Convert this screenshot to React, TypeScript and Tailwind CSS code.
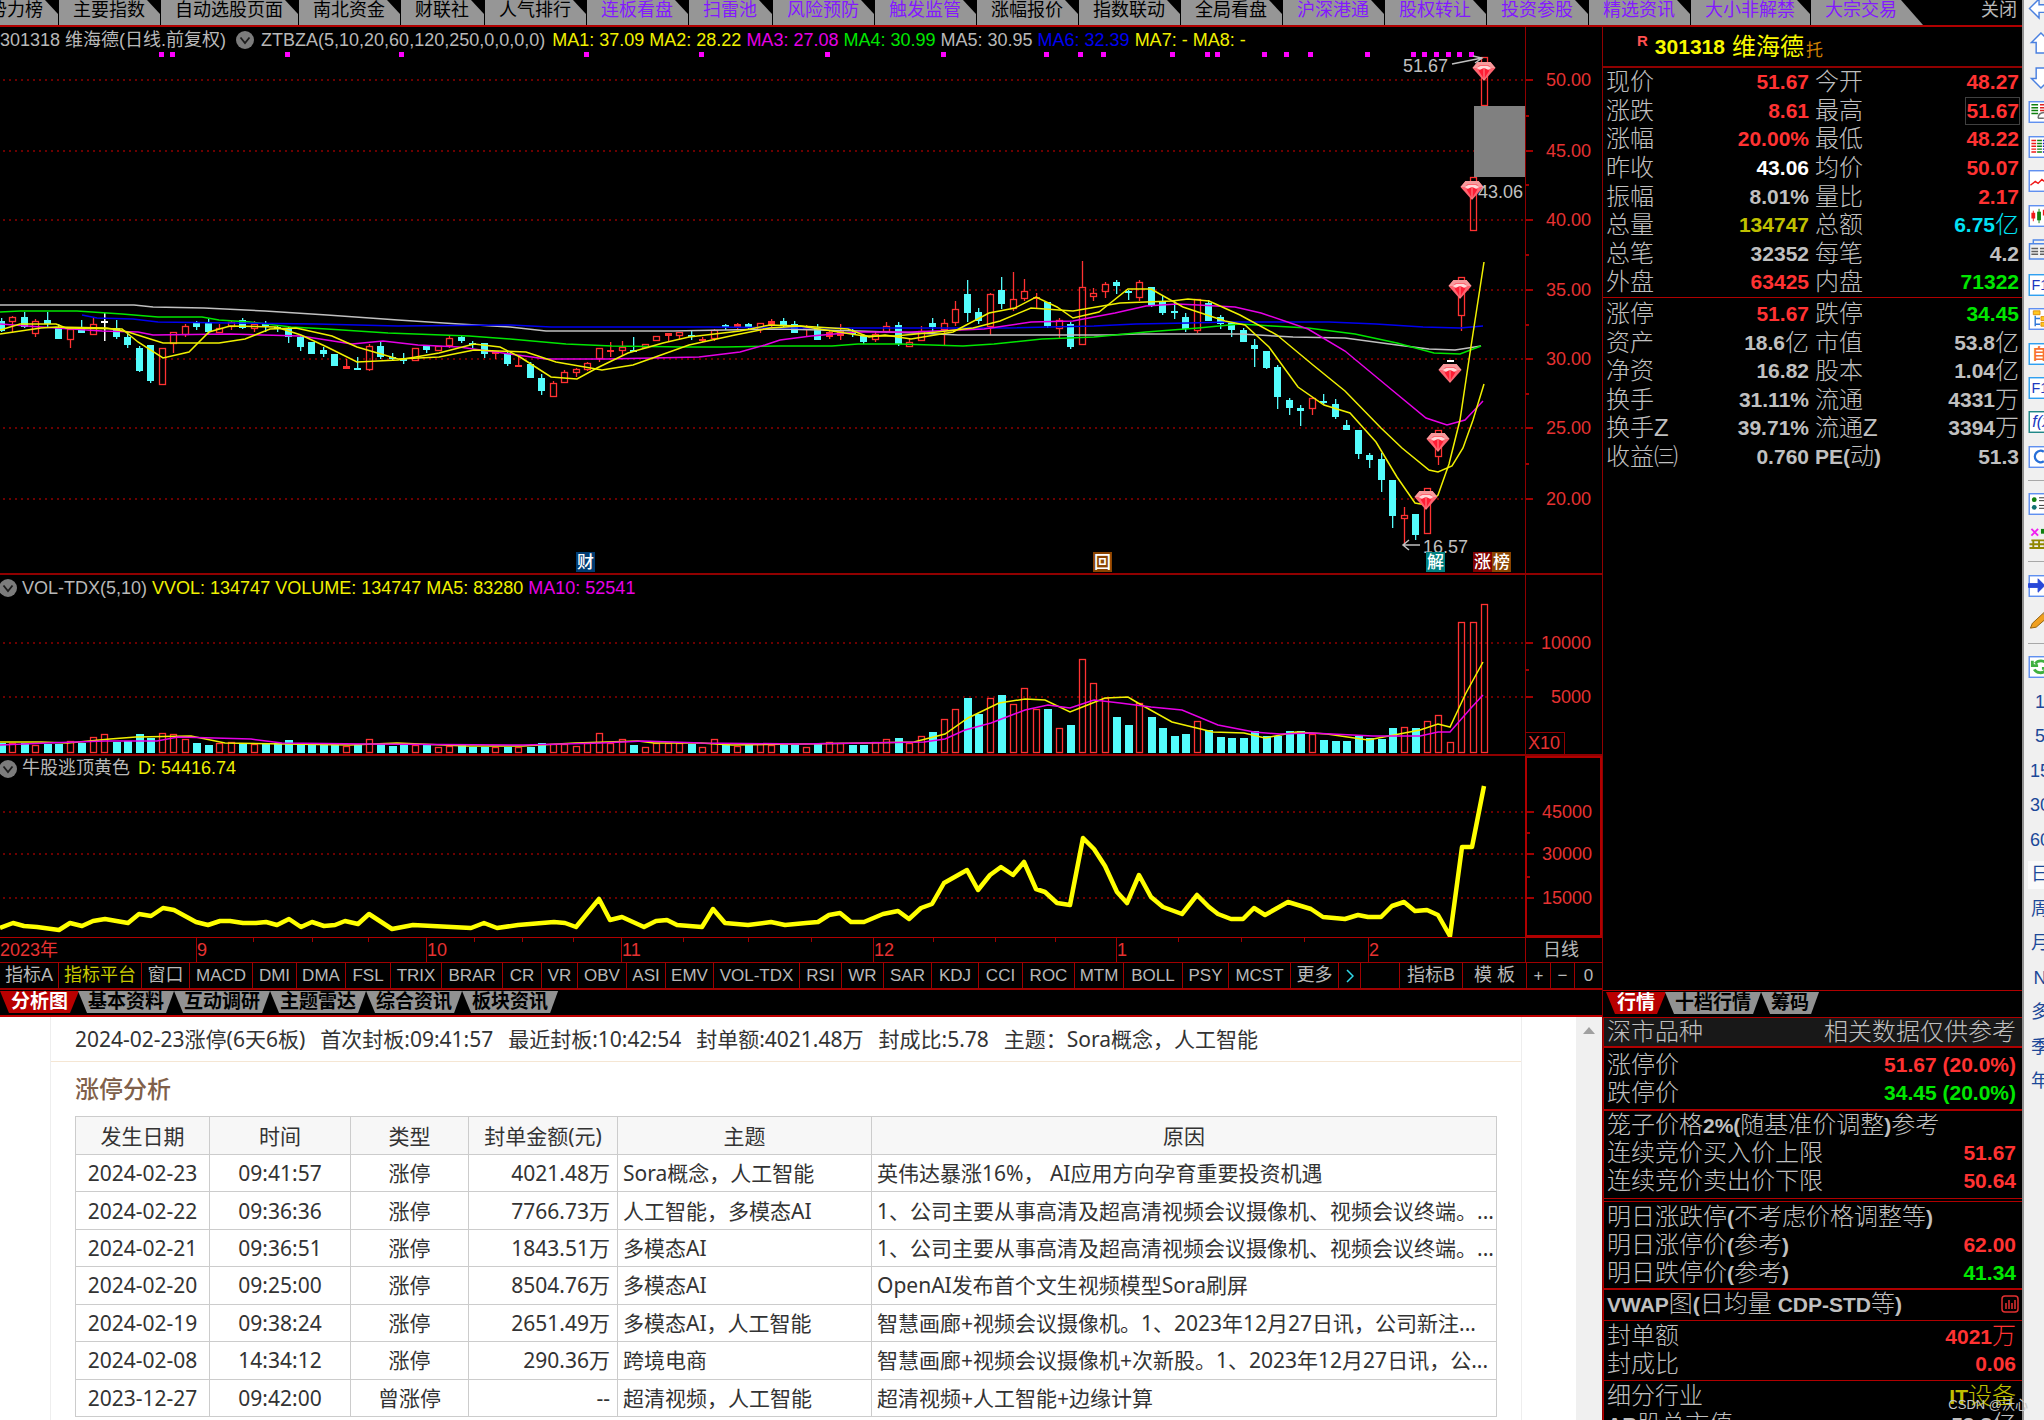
import { Fragment, type ReactNode } from 'react';

type Kind = 'u' | 'd' | 's' | 'w';
// kind, body top, body bottom, high, low
type Candle = [Kind, number, number, number, number];

const STEP = 11.5;
const candleX = (i: number) => Math.round(0.6 + STEP * i);

const topTabs = [
  { label: '主要指数', hot: false },
  { label: '自动选股页面', hot: false },
  { label: '南北资金', hot: false },
  { label: '财联社', hot: false },
  { label: '人气排行', hot: false },
  { label: '连板看盘', hot: true },
  { label: '扫雷池', hot: true },
  { label: '风险预防', hot: true },
  { label: '触发监管', hot: true },
  { label: '涨幅报价', hot: false },
  { label: '指数联动', hot: false },
  { label: '全局看盘', hot: false },
  { label: '沪深港通', hot: true },
  { label: '股权转让', hot: true },
  { label: '投资参股', hot: true },
  { label: '精选资讯', hot: true },
  { label: '大小非解禁', hot: true },
];

// Values are in thirds of a pixel under the base line of the segment.
const segments: { base: number; start: number; rows: Candle[] }[] = [
  {
    base: 300,
    start: 0,
    rows: [
      ['d', 62, 92, 55, 97], ['u', 52, 65, 48, 95], ['d', 50, 82, 35, 85], ['u', 62, 102, 58, 110],
      ['d', 60, 72, 35, 80], ['d', 82, 117, 72, 117], ['u', 88, 120, 80, 143], ['d', 80, 98, 60, 98],
      ['u', 72, 106, 55, 106], ['w', 64, 67, 40, 122], ['d', 85, 112, 60, 117], ['d', 112, 135, 92, 143],
      ['d', 145, 212, 137, 216], ['d', 135, 243, 135, 248], ['u', 145, 255, 145, 255], ['u', 97, 133, 97, 160],
      ['u', 78, 104, 72, 112], ['d', 65, 80, 62, 90], ['d', 65, 95, 57, 104], ['u', 85, 98, 72, 98],
      ['u', 65, 82, 62, 90], ['d', 60, 85, 55, 88], ['u', 72, 88, 62, 95], ['d', 70, 78, 62, 95],
      ['d', 80, 86, 76, 95], ['d', 84, 112, 80, 130], ['d', 112, 140, 108, 152], ['d', 125, 162, 125, 162],
      ['d', 150, 163, 142, 172], ['d', 162, 198, 162, 198], ['s', 198, 206, 178, 206], ['d', 203, 207, 172, 207],
      ['u', 137, 210, 132, 214], ['d', 138, 170, 125, 176], ['d', 172, 178, 160, 182], ['d', 176, 184, 158, 193],
      ['u', 145, 182, 145, 182], ['d', 138, 150, 138, 160], ['u', 138, 152, 138, 152], ['u', 115, 138, 108, 145],
      ['d', 112, 124, 106, 130], ['d', 130, 134, 122, 145], ['d', 130, 162, 130, 175], ['s', 154, 162, 154, 177],
      ['d', 158, 192, 152, 197], ['s', 195, 202, 172, 202], ['d', 193, 234, 187, 234], ['d', 234, 274, 222, 284],
      ['u', 249, 291, 243, 291], ['u', 216, 250, 210, 250], ['u', 208, 218, 204, 230], ['u', 189, 210, 185, 213],
      ['u', 145, 178, 145, 187], ['s', 150, 153, 127, 170], ['u', 142, 152, 122, 168], ['d', 150, 155, 112, 155],
      ['u', 132, 145, 132, 145], ['u', 109, 124, 109, 124], ['s', 100, 108, 100, 126], ['u', 97, 107, 97, 117],
      ['d', 106, 110, 90, 120], ['s', 118, 121, 110, 127], ['u', 90, 117, 86, 122], ['d', 76, 82, 72, 90],
      ['s', 72, 80, 68, 86], ['d', 72, 82, 68, 86], ['u', 70, 90, 70, 98], ['s', 64, 74, 58, 80],
    ],
  },
  {
    base: 240,
    start: 68,
    rows: [
      ['d', 243, 256, 234, 262], ['d', 253, 278, 243, 278], ['s', 265, 270, 255, 290], ['d', 265, 300, 252, 300],
      ['s', 275, 292, 270, 297], ['s', 270, 287, 252, 300], ['d', 275, 280, 268, 292], ['d', 288, 306, 282, 312],
      ['u', 282, 300, 275, 306], ['u', 258, 275, 247, 280], ['d', 256, 312, 247, 318], ['u', 305, 322, 295, 322],
      ['u', 272, 304, 258, 304], ['d', 248, 262, 234, 275], ['u', 250, 270, 238, 318], ['u', 208, 250, 184, 258],
      ['d', 162, 220, 120, 245], ['d', 217, 243, 203, 252], ['u', 163, 262, 158, 284], ['d', 150, 192, 112, 207],
      ['u', 178, 206, 95, 214], ['u', 154, 178, 118, 182], ['s', 172, 178, 158, 205], ['d', 185, 257, 185, 264],
      ['u', 241, 268, 235, 294], ['d', 252, 320, 247, 328], ['u', 142, 314, 64, 314], ['u', 160, 170, 145, 184],
      ['u', 133, 156, 126, 174], ['d', 126, 138, 120, 162], ['d', 152, 156, 150, 180], ['u', 127, 174, 121, 184],
      ['d', 140, 195, 140, 202], ['d', 182, 219, 168, 224], ['d', 214, 218, 184, 238], ['d', 230, 268, 220, 275],
      ['u', 178, 272, 178, 280], ['d', 190, 243, 180, 243], ['d', 230, 252, 225, 268], ['d', 247, 270, 247, 292],
      ['d', 270, 305, 265, 305], ['d', 315, 327, 297, 382], ['d', 333, 384, 333, 388], ['d', 382, 471, 374, 508],
      ['d', 481, 504, 473, 526], ['d', 505, 512, 495, 558], ['u', 475, 508, 470, 525], ['d', 482, 490, 463, 494],
      ['d', 491, 531, 478, 536], ['d', 555, 571, 541, 571], ['d', 571, 643, 571, 656], ['d', 644, 660, 639, 684],
      ['d', 657, 720, 640, 756], ['d', 720, 828, 720, 864], ['u', 825, 836, 801, 915], ['d', 823, 886, 823, 900],
      ['u', 745, 882, 745, 882], ['u', 570, 652, 570, 674], ['w', 361, 365, 361, 365], ['u', 110, 228, 110, 274],
      ['u', -189, -27, -189, -27], ['u', -549, -402, -549, -402],
    ],
  },
];

const candles = segments.flatMap(({ base, start, rows }) =>
  rows.map(([kind, ...ys], i) => {
    const [top, bottom, high, low] = ys.map((v) => Math.round(base + v / 3));
    return { kind, x: candleX(start + i), top, bottom, high, low };
  }),
);

const volumes = [
  31, 31, 29, 24, 27, 27, 37, 29, 47, 56, 34, 37, 58, 46, 61, 56, 41, 31, 25, 29, 32, 29, 27, 29, 31, 39, 29, 28, 24, 24,
  22, 24, 42, 27, 21, 23, 25, 23, 19, 22, 23, 19, 19, 19, 19, 19, 19, 30, 27, 27, 21, 31, 61, 31, 41, 25, 19, 29, 29, 29,
  27, 19, 42, 27, 21, 23, 27, 23, 23, 23, 19, 31, 33, 31, 25, 25, 33, 43, 44, 31, 51, 62, 101, 132, 166, 116, 164, 175,
  146, 196, 131, 131, 74, 85, 281, 209, 164, 107, 85, 151, 107, 76, 52, 58, 97, 70, 49, 44, 44, 66, 52, 52, 67, 67, 57,
  39, 35, 35, 51, 44, 43, 75, 79, 75, 97, 115, 34, 393, 393, 447,
];

const maLines = [
  { color: '#c0c0c0', points: '0,305 134,305 153,307 204,308 265,311 327,315 398,320 459,324 510,327 546,331 673,331 780,329 858,331 916,333 958,335 1109,335 1136,334 1240,334 1293,337 1345,338 1397,345 1429,349 1455,350 1481,346' },
  { color: '#00e600', points: '0,312 20,311 77,311 122,314 158,317 202,317 219,320 250,322 291,327 327,329 388,333 469,336 510,339 566,344 612,346 684,347 724,347 780,346 832,346 858,344 900,344 963,346 994,344 1042,339 1094,337 1146,332 1198,328 1240,324 1272,326 1308,328 1355,334 1397,343 1434,353 1460,354 1481,346' },
  { color: '#0000f0', points: '82,315 97,318 133,319 158,322 230,323 316,324 398,326 510,325 551,327 709,327 800,328 1005,328 1094,326 1136,324 1188,323 1230,322 1329,322 1376,324 1423,327 1460,328 1483,326' },
  { color: '#e600e6', points: '0,324 41,327 102,331 138,332 153,335 230,334 301,336 352,344 383,341 418,345 459,347 510,354 546,359 607,359 699,357 740,352 765,345 780,340 811,336 858,332 911,332 984,329 1031,322 1073,321 1115,313 1146,306 1177,304 1198,305 1235,307 1261,313 1308,329 1345,351 1392,390 1426,418 1447,425 1465,420 1483,401' },
  { color: '#f0f000', points: '0,334 41,328 56,327 107,328 128,332 163,343 219,343 245,339 270,329 296,328 332,336 357,347 398,359 439,357 474,350 526,352 556,362 602,370 633,365 689,345 735,335 770,328 800,326 832,331 864,336 895,336 937,332 973,328 1000,321 1031,308 1073,311 1120,303 1172,301 1188,299 1209,301 1240,315 1277,335 1313,365 1345,391 1381,428 1402,448 1429,470 1438,472 1452,466 1463,448 1473,420 1484,384' },
  { color: '#f0f000', points: '0,330 20,324 56,324 66,328 122,329 138,342 163,358 189,352 209,332 230,326 276,327 301,335 327,347 357,362 398,360 439,353 474,344 500,347 520,357 551,377 577,379 597,368 628,353 663,343 689,337 740,331 770,325 800,326 848,329 869,337 885,335 911,339 953,332 989,313 1015,308 1036,297 1057,307 1073,318 1099,312 1128,289 1151,289 1183,307 1225,321 1245,325 1269,347 1298,387 1324,405 1350,413 1376,442 1397,477 1415,503 1426,505 1438,495 1449,464 1460,420 1470,353 1484,262' },
];

const volLines = [
  { color: '#f0f000', points: '0,742 41,742 68,743 110,739 136,737 191,736 225,743 350,745 397,743 466,746 523,746 575,743 638,741 654,743 701,743 732,745 800,744 867,743 914,742 945,734 968,718 999,703 1025,699 1045,700 1070,712 1085,706 1105,698 1128,697 1138,703 1172,722 1213,732 1244,733 1265,738 1296,732 1327,734 1368,740 1394,735 1420,730 1438,724 1450,727 1466,693 1483,662' },
  { color: '#e600e6', points: '0,745 47,743 105,741 157,741 178,737 251,739 282,743 366,744 523,745 601,743 643,741 701,743 800,744 924,742 945,739 965,730 991,723 1025,710 1048,705 1070,708 1094,700 1120,703 1151,707 1182,710 1218,725 1254,732 1280,734 1311,733 1373,736 1420,736 1438,732 1450,732 1471,708 1483,695' },
];

const escapeLine =
  '0,928 13,923 24,926 37,927 59,930 70,923 82,926 93,921 105,919 128,923 139,914 151,916 163,908 174,910 196,922 208,925 220,921 230,921 243,923 256,923 266,922 277,925 289,919 301,927 312,922 324,926 335,925 345,921 358,924 369,914 392,929 413,925 471,928 484,923 497,928 518,925 554,922 565,923 576,927 599,899 610,920 622,917 644,927 656,921 667,920 677,925 702,927 713,909 725,923 748,925 771,922 785,925 806,923 818,922 829,915 840,913 851,922 864,922 883,914 898,911 909,919 921,908 932,904 944,883 967,870 978,890 990,875 1001,867 1013,875 1024,862 1036,889 1045,892 1057,903 1070,905 1083,838 1094,849 1105,866 1117,892 1127,903 1139,875 1151,897 1163,907 1182,914 1197,895 1209,907 1218,914 1231,919 1243,919 1254,908 1265,915 1288,902 1311,909 1323,917 1345,919 1358,915 1368,917 1381,917 1392,906 1404,902 1415,911 1427,910 1438,915 1450,936 1462,847 1472,847 1484,786';

const signalDots = [
  161, 172, 287, 401, 586, 701, 827, 943, 1046, 1080, 1103, 1172, 1207, 1217, 1264, 1286, 1310, 1367, 1413, 1424, 1436,
  1448, 1459, 1471,
];

const gems = [
  [1484, 62], [1472, 181], [1460, 280], [1450, 364], [1438, 433], [1426, 491],
];

const badges = [
  { x: 576, text: '财', fill: '#003c72' },
  { x: 1093, text: '回', fill: '#8a4400' },
  { x: 1426, text: '解', fill: '#008080' },
  { x: 1473, text: '涨', fill: '#800000' },
  { x: 1492, text: '榜', fill: '#8a4400' },
];

const months = [
  { x: 196, label: '9' },
  { x: 426, label: '10' },
  { x: 621, label: '11' },
  { x: 873, label: '12' },
  { x: 1116, label: '1' },
  { x: 1368, label: '2' },
];
const weekTicks = [253, 312, 368, 474, 522, 573, 683, 748, 811, 933, 995, 1055, 1178, 1241, 1304];

const indicators = [
  { label: '指标A', width: 'w-[59px] text-[18px]' },
  { label: '指标平台', width: 'w-[83px] text-[18px]', active: true },
  { label: '窗口', width: 'w-[48px] text-[18px]' },
  { label: 'MACD', width: 'w-[63px]' },
  { label: 'DMI', width: 'w-[44px]' },
  { label: 'DMA', width: 'w-[49px]' },
  { label: 'FSL', width: 'w-[45px]' },
  { label: 'TRIX', width: 'w-[51px]' },
  { label: 'BRAR', width: 'w-[61px]' },
  { label: 'CR', width: 'w-[39px]' },
  { label: 'VR', width: 'w-[36px]' },
  { label: 'OBV', width: 'w-[49px]' },
  { label: 'ASI', width: 'w-[39px]' },
  { label: 'EMV', width: 'w-[48px]' },
  { label: 'VOL-TDX', width: 'w-[86px]' },
  { label: 'RSI', width: 'w-[42px]' },
  { label: 'WR', width: 'w-[42px]' },
  { label: 'SAR', width: 'w-[48px]' },
  { label: 'KDJ', width: 'w-[47px]' },
  { label: 'CCI', width: 'w-[44px]' },
  { label: 'ROC', width: 'w-[52px]' },
  { label: 'MTM', width: 'w-[49px]' },
  { label: 'BOLL', width: 'w-[59px]' },
  { label: 'PSY', width: 'w-[46px]' },
  { label: 'MCST', width: 'w-[62px]' },
  { label: '更多', width: 'w-[48px] text-[18px]' },
];

const quotes = [
  ['现价', '51.67', '', 'text-[#ff3232]', '今开', '48.27', '', 'text-[#ff3232]'],
  ['涨跌', '8.61', '', 'text-[#ff3232]', '最高', '51.67', '', 'text-[#ff3232] outline outline-[#404040]'],
  ['涨幅', '20.00%', '', 'text-[#ff3232]', '最低', '48.22', '', 'text-[#ff3232]'],
  ['昨收', '43.06', '', 'text-white', '均价', '50.07', '', 'text-[#ff3232]'],
  ['振幅', '8.01%', '', 'text-[#c0c0c0]', '量比', '2.17', '', 'text-[#ff3232]'],
  ['总量', '134747', '', 'text-[#c0c000]', '总额', '6.75', '亿', 'text-[#02e2f4]'],
  ['总笔', '32352', '', 'text-[#c0c0c0]', '每笔', '4.2', '', 'text-[#c0c0c0]'],
  ['外盘', '63425', '', 'text-[#ff3232]', '内盘', '71322', '', 'text-[#00e600]'],
];

const fundamentals = [
  ['涨停', '51.67', '', 'text-[#ff3232]', '跌停', '34.45', '', 'text-[#00e600]'],
  ['资产', '18.6', '亿', 'text-[#c0c0c0]', '市值', '53.8', '亿', 'text-[#c0c0c0]'],
  ['净资', '16.82', '', 'text-[#c0c0c0]', '股本', '1.04', '亿', 'text-[#c0c0c0]'],
  ['换手', '31.11%', '', 'text-[#c0c0c0]', '流通', '4331', '万', 'text-[#c0c0c0]'],
  ['换手Z', '39.71%', '', 'text-[#c0c0c0]', '流通Z', '3394', '万', 'text-[#c0c0c0]'],
  ['收益㈢', '0.760', '', 'text-[#c0c0c0]', 'PE(动)', '51.3', '', 'text-[#c0c0c0]'],
];

const limitUps = [
  ['2024-02-23', '09:41:57', '涨停', '4021.48万', 'Sora概念，人工智能', '英伟达暴涨16%， AI应用方向孕育重要投资机遇'],
  ['2024-02-22', '09:36:36', '涨停', '7766.73万', '人工智能，多模态AI', '1、公司主要从事高清及超高清视频会议摄像机、视频会议终端。...'],
  ['2024-02-21', '09:36:51', '涨停', '1843.51万', '多模态AI', '1、公司主要从事高清及超高清视频会议摄像机、视频会议终端。...'],
  ['2024-02-20', '09:25:00', '涨停', '8504.76万', '多模态AI', 'OpenAI发布首个文生视频模型Sora刷屏'],
  ['2024-02-19', '09:38:24', '涨停', '2651.49万', '多模态AI，人工智能', '智慧画廊+视频会议摄像机。1、2023年12月27日讯，公司新注...'],
  ['2024-02-08', '14:34:12', '涨停', '290.36万', '跨境电商', '智慧画廊+视频会议摄像机+次新股。1、2023年12月27日讯，公...'],
  ['2023-12-27', '09:42:00', '曾涨停', '--', '超清视频，人工智能', '超清视频+人工智能+边缘计算'],
];

function GridLine({ y }: { y: number }) {
  return <line x1="3" x2="100%" y1={y} y2={y} stroke="#900000" strokeWidth="1.5" strokeDasharray="2 4" />;
}

function Collapse({ label, className = '' }: { label: string; className?: string }) {
  return (
    <button aria-label={label} className={`shrink-0 ${className}`}>
      <svg className="size-[18px]" viewBox="0 0 18 18">
        <circle cx="9" cy="9" r="9" fill="#7c7c7c" />
        <path d="M4.500 6.500 9 12l4.500-5.500" fill="none" stroke="#1c1c1c" strokeWidth="1.800" />
      </svg>
    </button>
  );
}

function Gem({ x, y }: { x: number; y: number }) {
  return (
    <g transform={`translate(${x - 11.5} ${y})`}>
      <path d="M5 0h13l5 6-11.500 13L0 6z" fill="#ff6470" />
      <path d="M5 0h13l5 6h-4l-3-3H7L4 6H0z" fill="#f79a9c" />
      <path d="M4 6 8 4h7l4 2-4 2-3.500-2L8 8z" fill="#ffd9d9" />
      <path d="M6 8.500 11.500 6 17 8.500 11.500 17z" fill="#ff1c34" />
      <path d="M11.500 6v12" stroke="#ff8d90" />
    </g>
  );
}

function CandleShape({ kind, x, top, bottom, high, low }: (typeof candles)[number]) {
  if (kind === 'w') {
    return (
      <g fill="#ffffff">
        <rect x={x - 3} y={top} width="7" height="2" />
        <rect x={x} y={high} width="1.5" height={low - high} />
      </g>
    );
  }
  const height = Math.max(bottom - top, 2);
  if (kind === 'u') {
    return (
      <g stroke="#ff3232" fill="none" strokeWidth="1.3">
        <path d={`M${x + 0.5} ${high}V${top}M${x + 0.5} ${bottom}V${low}`} />
        <rect x={x - 2.5} y={top + 0.5} width="6" height={Math.max(height - 1, 1)} />
      </g>
    );
  }
  return (
    <g fill={kind === 'd' ? '#54fcfc' : '#ff3232'}>
      <rect x={x - 3} y={top} width="7" height={height} />
      <rect x={x} y={high} width="1.3" height={low - high} />
    </g>
  );
}

function PriceChart() {
  return (
    <svg className="block h-[521px] w-full overflow-hidden text-[18px]">
      <g transform="translate(0 -52)">
        {[80, 151, 220, 290, 359, 428, 499].map((y) => (
          <GridLine key={y} y={y} />
        ))}
        {signalDots.map((x) => (
          <rect key={x} x={x - 2} y="52" width="5" height="5" fill="#ff00ff" />
        ))}
        {candles.map((candle) => (
          <CandleShape key={candle.x} {...candle} />
        ))}
        {maLines.map((line) => (
          <polyline key={line.points} points={line.points} fill="none" stroke={line.color} strokeWidth="1.5" />
        ))}
        <rect x="1474" y="106" width="51" height="71" fill="#808080" />
        {gems.map(([x, y]) => (
          <Gem key={x} x={x} y={y} />
        ))}
        <g fill="#c0c0c0">
          <text x="1403" y="72">51.67</text>
          <text x="1478" y="198">43.06</text>
          <text x="1423" y="553">16.57</text>
        </g>
        <g fill="none" stroke="#c0c0c0" strokeWidth="1.5">
          <path d="M1452 64l30-6m-9-2 9 2-7 5" />
          <path d="M1420 545h-17m6-5-6 5 6 5" />
        </g>
        {badges.map((badge) => (
          <g key={badge.text}>
            <rect x={badge.x} y="552" width="19" height="20" fill={badge.fill} />
            <text x={badge.x + 1} y="568" className="text-[17px] font-medium" fill="#ffffff">
              {badge.text}
            </text>
          </g>
        ))}
      </g>
    </svg>
  );
}

function VolumeChart() {
  return (
    <svg className="block h-[154px] w-full overflow-hidden">
      <g transform="translate(0 -600)">
        <GridLine y={643} />
        <GridLine y={697} />
        {volumes.map((v, i) => {
          const h = Math.round(v / 3);
          const x = candleX(i);
          return candles[i].kind === 'd' ? (
            <rect key={x} x={x - 3} y={753 - h} width="8" height={h} fill="#54fcfc" />
          ) : (
            <rect key={x} x={x - 2.5} y={753.5 - h} width="6" height={h - 1} fill="none" stroke="#ff3232" strokeWidth="1.3" />
          );
        })}
        {volLines.map((line) => (
          <polyline key={line.color} points={line.points} fill="none" stroke={line.color} strokeWidth="1.5" />
        ))}
      </g>
    </svg>
  );
}

function EscapeChart() {
  return (
    <svg className="block h-[156px] w-full overflow-hidden">
      <g transform="translate(0 -781)">
        {[812, 854, 898].map((y) => (
          <GridLine key={y} y={y} />
        ))}
        <polyline points={escapeLine} fill="none" stroke="#ffff00" strokeWidth="4.5" strokeLinejoin="round" />
      </g>
    </svg>
  );
}

function Axis({ top, labels, minor }: { top: number; labels: [number, string][]; minor: number[] }) {
  return (
    <svg className="block h-full w-full text-[18px]">
      <g transform={`translate(0 ${-top})`}>
        {labels.map(([y, text]) => (
          <Fragment key={text}>
            <path d={`M0 ${y}h7`} stroke="#a00000" strokeWidth="2" />
            <text x="65" y={y + 6} textAnchor="end" fill="#e63232">
              {text}
            </text>
          </Fragment>
        ))}
        {minor.map((y) => (
          <path key={y} d={`M0 ${y}h3`} stroke="#a00000" strokeWidth="2" />
        ))}
      </g>
    </svg>
  );
}

function SlantTabs({ tabs }: { tabs: string[] }) {
  return (
    <nav className="flex items-center pt-px text-[19px] leading-[22px] font-bold">
      {tabs.map((tab, i) => (
        <button
          key={tab}
          className={`-mr-[2px] px-[11px] whitespace-nowrap ${
            i === 0
              ? 'relative bg-[#b80000] text-white [clip-path:polygon(0_0,100%_0,calc(100%-9px)_100%,9px_100%)]'
              : 'bg-[#929292] text-black [clip-path:polygon(1px_0,calc(100%-1px)_0,calc(100%-9px)_100%,10px_100%)]'
          }`}
        >
          {tab}
        </button>
      ))}
    </nav>
  );
}

function TopTabs() {
  return (
    <header className="flex h-[27px] shrink-0 border-b-2 border-[#b00000] text-[18px] leading-[21px] whitespace-nowrap">
      <nav className="flex min-w-0 flex-1 overflow-hidden">
        <button className="flex w-[59px] shrink-0 justify-end bg-[#969696] pr-[16px] text-black [clip-path:polygon(0_0,calc(100%-14px)_0,calc(100%-1px)_14px,calc(100%-1px)_100%,0_100%)]">
          势力榜
        </button>
        {topTabs.map((tab) => (
          <button
            key={tab.label}
            className={`flex shrink-0 bg-[#969696] pr-[16px] pl-[14px] [clip-path:polygon(0_0,calc(100%-14px)_0,calc(100%-1px)_14px,calc(100%-1px)_100%,0_100%)] ${
              tab.hot ? 'text-[#8418ff]' : 'text-black'
            }`}
          >
            {tab.label}
          </button>
        ))}
        <button className="flex shrink-0 bg-[#969696] pr-[26px] pl-[14px] text-[#8418ff] [clip-path:polygon(0_0,calc(100%-22px)_0,100%_100%,0_100%)]">
          大宗交易
        </button>
      </nav>
      <button className="flex px-[5px] text-[#b8b8b8]">关闭</button>
    </header>
  );
}

function IndicatorBar() {
  const cell = 'shrink-0 border-r border-[#a00000] text-center whitespace-nowrap';
  return (
    <div className="flex h-[27px] border-b-2 border-[#a00000] text-[17px] leading-[25px] text-[#b8b8b8]">
      {indicators.map((item) => (
        <button key={item.label} className={`${cell} ${item.width} ${item.active ? 'text-[#c8c800]' : ''}`}>
          {item.label}
        </button>
      ))}
      <button aria-label="下一页" className="w-[22px] shrink-0 border-r border-[#a00000]">
        <svg className="mx-auto h-[25px] w-[8px]" viewBox="0 0 8 25">
          <path d="M1 7l6 6-6 6" fill="none" stroke="#30d8e8" strokeWidth="1.500" />
        </svg>
      </button>
      <span className="flex-1 border-r border-[#a00000]" />
      <button className={`${cell} w-[63px] text-[18px]`}>指标B</button>
      <button className={`${cell} w-[64px] text-[18px]`}>模 板</button>
      <button className={`${cell} w-[24px]`}>+</button>
      <button className={`${cell} w-[24px]`}>−</button>
      <button className="w-[27px] shrink-0">0</button>
    </div>
  );
}

function ChartColumn() {
  return (
    <>
      <section className="flex h-[548px] shrink-0 border-b-2 border-[#900000]">
        <div className="min-w-0 flex-1">
          <div className="flex h-[25px] items-center gap-[5px] pt-px text-[18px] whitespace-nowrap">
            <span>301318 维海德(日线.前复权)</span>
            <Collapse label="主图指标" className="mr-[2px] ml-[5px]" />
            <span className="mr-[2px]">ZTBZA(5,10,20,60,120,250,0,0,0,0)</span>
            <span className="text-[#f0f000]">MA1: 37.09</span>
            <span className="text-[#f0f000]">MA2: 28.22</span>
            <span className="text-[#e600e6]">MA3: 27.08</span>
            <span className="text-[#00e600]">MA4: 30.99</span>
            <span>MA5: 30.95</span>
            <span className="text-[#0000f0]">MA6: 32.39</span>
            <span className="text-[#f0f000]">MA7: -</span>
            <span className="text-[#f0f000]">MA8: -</span>
          </div>
          <PriceChart />
        </div>
        <div className="w-[77px] border-l border-[#900000]">
          <Axis
            top={27}
            labels={[[80, '50.00'], [151, '45.00'], [220, '40.00'], [290, '35.00'], [359, '30.00'], [428, '25.00'], [499, '20.00']]}
            minor={[116, 185, 255, 325, 394, 464]}
          />
        </div>
      </section>
      <section className="flex h-[181px] shrink-0 border-b-2 border-[#900000]">
        <div className="min-w-0 flex-1">
          <div className="flex h-[25px] items-center gap-[5px] text-[18px] leading-[22px] whitespace-nowrap">
            <Collapse label="成交量指标" className="-ml-px" />
            <span>VOL-TDX(5,10)</span>
            <span className="text-[#f0f000]">VVOL: 134747</span>
            <span className="text-[#f0f000]">VOLUME: 134747</span>
            <span className="text-[#f0f000]">MA5: 83280</span>
            <span className="text-[#e600e6]">MA10: 52541</span>
          </div>
          <VolumeChart />
        </div>
        <div className="flex w-[77px] flex-col border-l border-[#900000]">
          <div className="min-h-0 flex-1">
            <Axis top={575} labels={[[643, '10000'], [697, '5000']]} minor={[670]} />
          </div>
          <span className="h-[22px] w-[39px] border-t border-r border-[#900000] pl-[2px] text-[18px] leading-[21px] text-[#e63232]">
            X10
          </span>
        </div>
      </section>
      <section className="flex h-[182px] shrink-0 border-b border-[#b00000]">
        <div className="min-w-0 flex-1">
          <div className="flex h-[25px] items-center gap-[5px] text-[18px] whitespace-nowrap">
            <Collapse label="副图指标" className="-ml-px" />
            <span>牛股逃顶黄色</span>
            <span className="ml-[3px] text-[#f0f000]">D: 54416.74</span>
          </div>
          <EscapeChart />
        </div>
        <div className="w-[77px] border-2 border-[#b00000]">
          <Axis top={758} labels={[[812, '45000'], [854, '30000'], [898, '15000']]} minor={[833, 877]} />
        </div>
      </section>
      <div className="flex h-[25px] shrink-0 border-b border-[#a00000]">
        <svg className="block h-full min-w-0 flex-1 text-[18px]">
          <text x="0" y="18" fill="#e63232">2023年</text>
          {months.map((m) => (
            <Fragment key={m.x}>
              <path d={`M${m.x + 0.5} 0v25`} stroke="#a00000" />
              <text x={m.x + 1} y="18" fill="#e63232">
                {m.label}
              </text>
            </Fragment>
          ))}
          {weekTicks.map((x) => (
            <path key={x} d={`M${x + 0.5} 0v4`} stroke="#a00000" />
          ))}
        </svg>
        <span className="w-[77px] border-l border-[#a00000] pl-[17px] text-[18px] leading-[24px]">日线</span>
      </div>
      <IndicatorBar />
      <div className="h-[27px] shrink-0 border-b-2 border-[#c00000]">
        <SlantTabs tabs={['分析图', '基本资料', '互动调研', '主题雷达', '综合资讯', '板块资讯']} />
      </div>
    </>
  );
}

function Analysis() {
  const cell = 'border border-[#cccccc]';
  return (
    <section className='flex min-h-0 flex-1 bg-white font-["Noto_Sans","Noto_Sans_CJK_SC",sans-serif] text-[21px] leading-[28px] text-[#333333]'>
      <div className="mr-[54px] ml-[50px] min-w-0 flex-1 overflow-hidden border-x border-[#eeeeee]">
        <p className="flex h-[45px] items-center gap-[15px] border-b border-[#f5e6d3] pl-[24px] whitespace-nowrap">
          <span>2024-02-23涨停(6天6板)</span>
          <span>首次封板:09:41:57</span>
          <span>最近封板:10:42:54</span>
          <span>封单额:4021.48万</span>
          <span>封成比:5.78</span>
          <span>主题：Sora概念，人工智能</span>
        </p>
        <h2 className="px-[24px] pt-[11px] pb-[11px] text-[24px] leading-[32px] font-medium text-[#80604a]">涨停分析</h2>
        <div className="px-[24px]">
          <table className="h-[301px] w-full table-fixed border-collapse whitespace-nowrap">
            <colgroup>
              <col className="w-[134px]" />
              <col className="w-[141px]" />
              <col className="w-[118px]" />
              <col className="w-[149px]" />
              <col className="w-[254px]" />
              <col />
            </colgroup>
            <thead className="bg-[#f7f7f7]">
              <tr className="h-[38px]">
                {['发生日期', '时间', '类型', '封单金额(元)', '主题', '原因'].map((h) => (
                  <th key={h} className={`${cell} font-normal`}>
                    {h}
                  </th>
                ))}
              </tr>
            </thead>
            <tbody>
              {limitUps.map(([date, time, type, amount, theme, reason]) => (
                <tr key={date} className="h-[37px]">
                  <td className={`${cell} text-center`}>{date}</td>
                  <td className={`${cell} text-center`}>{time}</td>
                  <td className={`${cell} text-center`}>{type}</td>
                  <td className={`${cell} pr-[7px] text-right`}>{amount}</td>
                  <td className={`${cell} pl-[5px]`}>{theme}</td>
                  <td className={`${cell} overflow-hidden pl-[5px]`}>{reason}</td>
                </tr>
              ))}
            </tbody>
          </table>
        </div>
      </div>
      <div className="flex w-[26px] justify-center bg-[#f0f0f0] pt-[10px]">
        <svg className="h-[7px] w-[12px]" viewBox="0 0 12 7">
          <path d="M6 0l6 7H0z" fill="#a0a0a0" />
        </svg>
      </div>
    </section>
  );
}

// Latin runs are marked with a leading asterisk and set bold.
function Mixed({ parts }: { parts: string[] }) {
  return (
    <>
      {parts.map((part, i) =>
        part.startsWith('*') ? (
          <span key={i} className="text-[21px] font-bold">
            {part.slice(1)}
          </span>
        ) : (
          <span key={i}>{part}</span>
        ),
      )}
    </>
  );
}

function Pair({ label, value, unit, color, className = '' }: { label: string; value: string; unit: string; color: string; className?: string }) {
  return (
    <div className={`flex h-[28px] items-center justify-between ${className}`}>
      <dt className="text-[24px] leading-[28px] font-light">
        {label === 'PE(动)' ? <Mixed parts={['*PE(', '动', '*)']} /> : label}
      </dt>
      <dd className={`flex h-[26px] items-center text-[21px] leading-[26px] font-bold ${color}`}>
        {value}
        {unit && <span className="text-[24px] leading-[28px] font-light">{unit}</span>}
      </dd>
    </div>
  );
}

function QuoteTable({ rows, className }: { rows: string[][]; className: string }) {
  return (
    <dl className={`grid auto-rows-fr grid-cols-[209px_1fr] items-start pr-[3px] pl-[3px] ${className}`}>
      {rows.map(([l1, v1, u1, c1, l2, v2, u2, c2]) => (
        <Fragment key={l1}>
          <Pair label={l1} value={v1} unit={u1} color={c1} className="pr-[6px]" />
          <Pair label={l2} value={v2} unit={u2} color={c2} />
        </Fragment>
      ))}
    </dl>
  );
}

function Row({ children, value, color = 'text-[#ff3232]' }: { children: ReactNode; value?: ReactNode; color?: string }) {
  return (
    <div className="flex h-[28px] shrink-0 items-center justify-between pr-[6px] pl-[3px] text-[24px] leading-[28px] font-light whitespace-nowrap">
      <span>{children}</span>
      <span className={`text-[21px] font-bold ${color}`}>{value}</span>
    </div>
  );
}

function QuotePanel() {
  return (
    <aside className="flex w-[420px] shrink-0 flex-col overflow-hidden border-l border-[#900000] text-[#c0c0c0]">
      <h1 className="flex h-[41px] shrink-0 border-b-2 border-[#900000] pl-[34px] text-[#f8f800]">
        <span className="mr-[7px] pt-[4px] text-[15px] leading-[20px] font-bold text-[#ff5050]">R</span>
        <span className="text-[21px] leading-[40px] font-bold">301318</span>
        <span className="ml-[7px] text-[24px] leading-[40px] font-normal">维海德</span>
        <span className="ml-[2px] text-[17px] leading-[48px] font-normal text-[#d08000]">托</span>
      </h1>
      <QuoteTable rows={quotes} className="h-[230px] shrink-0 border-b border-[#b00000]" />
      <QuoteTable rows={fundamentals} className="h-[173px] shrink-0 pt-[2px]" />
      <div className="h-[519px] shrink-0" />
      <div className="h-[28px] shrink-0 border-t border-b border-[#b00000] pl-[3px]">
        <SlantTabs tabs={['行情', '十档行情', '筹码']} />
      </div>
      <div className="border-l border-[#b00000] [&>div]:border-[#b00000]">
        <div className="flex h-[30px] items-center justify-between border-b-2 bg-[#181818] pr-[6px] pl-[3px] text-[24px] font-light">
          <span>深市品种</span>
          <span>相关数据仅供参考</span>
        </div>
        <div className="h-[63px] border-b-2 pt-[3px]">
          <Row value="51.67 (20.0%)">涨停价</Row>
          <Row value="34.45 (20.0%)" color="text-[#00e600]">跌停价</Row>
        </div>
        <div className="h-[88px] border-b">
          <Row>
            <Mixed parts={['笼子价格', '*2%(', '随基准价调整', '*)', '参考']} />
          </Row>
          <Row value="51.67">连续竞价买入价上限</Row>
          <Row value="50.64">连续竞价卖出价下限</Row>
        </div>
        <div className="mt-[2px] h-[89px] border-t border-b-2 py-px">
          <Row>
            <Mixed parts={['明日涨跌停', '*(', '不考虑价格调整等', '*)']} />
          </Row>
          <Row value="62.00">
            <Mixed parts={['明日涨停价', '*(', '参考', '*)']} />
          </Row>
          <Row value="41.34" color="text-[#00e600]">
            <Mixed parts={['明日跌停价', '*(', '参考', '*)']} />
          </Row>
        </div>
        <div className="h-[31px] border-b">
          <Row
            value={
              <button aria-label="VWAP图" className="-mr-[3px] block">
                <svg className="size-[18px]" viewBox="0 0 18 18" fill="none" stroke="#e03030" strokeWidth="1.500">
                  <rect x="1" y="1" width="16" height="16" rx="3" />
                  <path d="M5 14V8M8 14V5M11 14V8M14 14V5" />
                </svg>
              </button>
            }
          >
            <Mixed parts={['*VWAP', '图', '*(', '日均量', '* CDP-STD', '等', '*)']} />
          </Row>
        </div>
        <div className="h-[60px] border-b py-px">
          <Row value={<>4021<span className="text-[24px] font-light">万</span></>}>封单额</Row>
          <Row value="0.06">封成比</Row>
        </div>
        <div className="pt-px">
          <Row value={<>IT<span className="text-[24px] font-light">设备</span></>} color="text-[#c0c000]">细分行业</Row>
          <Row value={<>53.8<span className="text-[24px] font-light">亿</span></>} color="text-[#c0c0c0]">
            <Mixed parts={['*AB', '股总市值']} />
          </Row>
        </div>
      </div>
    </aside>
  );
}

const tools: { name: string; art: ReactNode; frame?: string }[] = [
  { name: '后退', art: <path d="M1 11 11 1v6h13v8H11v6z" fill="#fff" stroke="#4a80e0" strokeWidth="1.500" /> },
  { name: '上移', art: <path d="M13 1 23 11h-5v11H8V11H3z" fill="#fff" stroke="#4a80e0" strokeWidth="1.500" /> },
  { name: '下移', art: <path d="M13 22 23 12h-5V1H8v11H3z" fill="#fff" stroke="#4a80e0" strokeWidth="1.500" /> },
  {
    name: '报价',
    frame: '#6090f0',
    art: (
      <g fill="none" strokeWidth="1.500">
        <path d="M3 4h7M3 7h7M3 10h7M3 13h7" stroke="#108010" />
        <path d="M12 4h7M12 7h7M12 10h7" stroke="#e02020" />
        <path d="M10 18c0-4 3-6 7-6M10 18h6" stroke="#707070" />
      </g>
    ),
  },
  {
    name: '分时报价',
    frame: '#6090f0',
    art: (
      <g fill="none" strokeWidth="5" strokeDasharray="1.500 1.500">
        <path d="M5.500 4v15" stroke="#f01818" />
        <path d="M11.500 4v15" stroke="#108010" />
        <path d="M17.500 4v15" stroke="#1818c0" />
      </g>
    ),
  },
  { name: '分时', frame: '#6090f0', art: <path d="M2 16l5-4 3 2 4-4 4 3 5-6" fill="none" stroke="#f01818" strokeWidth="1.500" /> },
  {
    name: 'K线',
    frame: '#6090f0',
    art: (
      <g>
        <path d="M5 6v11M17 3v12" stroke="#f01818" />
        <path d="M3 8h4v6H3zM15 5h4v6h-4z" fill="#f01818" />
        <path d="M11 4v15" stroke="#108010" />
        <path d="M9 7h4v9H9z" fill="#108010" />
      </g>
    ),
  },
  {
    name: '多窗口',
    art: (
      <g fill="none" stroke="#5088e8" strokeWidth="1.500">
        <path d="M5 5V1h18v20H1V5h20" />
        <path d="M3 10h7M12 10h8M3 13h7M12 13h8M3 16h7M12 16h8" stroke="#606060" />
      </g>
    ),
  },
  { name: 'F10', frame: '#30a0f0', art: <text x="3" y="17" fontSize="15" fill="#2038c0">F10</text> },
  {
    name: '板块',
    frame: '#6090f0',
    art: (
      <g fill="#ffc820" stroke="#e09010">
        <path d="M5 3h7v4H5zM13 9h5v4h-5zM13 15h5v4h-5z" />
        <path d="M7 8v11M7 11h5M7 17h5" fill="none" stroke="#3078d8" strokeWidth="1.500" />
      </g>
    ),
  },
  { name: '自选', frame: '#30a0f0', art: <text x="4" y="17" fontSize="15" fontWeight="700" fill="#f87030">自</text> },
  { name: 'F15', frame: '#30a0f0', art: <text x="3" y="17" fontSize="15" fill="#2038c0">F15</text> },
  { name: '公式', frame: '#208888', art: <text x="4" y="17" fontSize="17" fontStyle="italic" fill="#2038c0">f(x)</text> },
  { name: '刷新', frame: '#6090f0', art: <path d="M16 6a6 6 0 1 0 0 10" fill="none" stroke="#2870d8" strokeWidth="2.500" /> },
];

const moreTools: typeof tools = [
  {
    name: '列表',
    frame: '#6090f0',
    art: (
      <g>
        <circle cx="6" cy="7" r="2.500" fill="#108010" />
        <circle cx="6" cy="15" r="2.500" fill="#107070" />
        <path d="M11 5h9M11 8h9M11 13h9M11 16h9" stroke="#303030" />
      </g>
    ),
  },
  {
    name: '画面组合',
    art: (
      <g>
        <path d="M3 2l7 7M10 2 3 9" stroke="#f020f0" strokeWidth="2" />
        <path d="M13 2h6v5h-6z" fill="#108010" />
        <path d="M1 18h22M3 14h18M5 14v8M11 14v8M17 14v8M1 22h22" stroke="#908800" strokeWidth="2" />
      </g>
    ),
  },
];

function ToolButton({ tool: { name, art, frame } }: { tool: (typeof tools)[number] }) {
  return (
    <button aria-label={name} className="flex h-[34px] w-[24px] shrink-0 items-center">
      <svg className="h-[22px] w-[24px]" viewBox="0 0 24 23">
        {frame && <rect x="0.75" y="0.75" width="23" height="21.500" fill="#fff" stroke={frame} strokeWidth="1.500" />}
        {art}
      </svg>
    </button>
  );
}

function Toolbar() {
  return (
    <nav className="w-[22px] shrink-0 overflow-hidden border-l-2 border-[#909090] bg-[#f0f0f0]">
      <div className="-mt-[8px] ml-[4px] flex w-[24px] flex-col">
        <div className="flex h-[486px] flex-col justify-between pb-[4px]">
          {tools.map((tool) => (
            <ToolButton key={tool.name} tool={tool} />
          ))}
        </div>
        <hr className="my-[2px] border-[#a8a8a8]" />
        <div className="flex flex-col py-[4px]">
          {moreTools.map((tool) => (
            <ToolButton key={tool.name} tool={tool} />
          ))}
        </div>
        <hr className="mt-[2px] mb-[7px] border-[#a8a8a8]" />
        <ToolButton
          tool={{
            name: '切换',
            frame: '#6090f0',
            art: <path d="M0 9h10V4l7 7-7 7v-5H0zM19 6h4M19 11h4M19 16h4" fill="#2848d8" stroke="#2848d8" />,
          }}
        />
        <ToolButton
          tool={{
            name: '画线',
            art: (
              <g>
                <path d="M2 20 4 15 18 2l5 4L8 19z" fill="#f0a020" stroke="#906010" />
                <path d="M15 5l4 4 5-4-4-4z" fill="#909090" />
              </g>
            ),
          }}
        />
        <hr className="mt-[6px] mb-[6px] border-[#a8a8a8]" />
        <ToolButton
          tool={{
            name: '更新',
            frame: '#6090f0',
            art: <path d="M19 8A7 6 0 0 0 7 8M4 5v5h6M6 14a7 6 0 0 0 12 1M20 18v-5h-6" fill="none" stroke="#40b040" strokeWidth="3" />,
          }}
        />
        <div className="mt-[4px] flex h-[408px] flex-col justify-between text-[18px] text-[#1c4898]">
          {['1', '5', '15', '30', '60', '日', '周', '月', 'N', '多', '季', '年'].map((p) => (
            <button key={p} className={`h-[28px] w-[24px] shrink-0 ${p === '日' ? 'bg-[#fafafa]' : ''}`}>
              {p}
            </button>
          ))}
        </div>
      </div>
    </nav>
  );
}

export default function App() {
  return (
    <div className='relative flex h-screen overflow-hidden bg-black font-["Liberation_Sans","Noto_Sans_CJK_SC",sans-serif] text-[#b8b8b8]'>
      <div className="flex min-w-0 flex-1 flex-col">
        <TopTabs />
        <div className="flex min-h-0 flex-1">
          <main className="flex min-w-0 flex-1 flex-col overflow-hidden">
            <ChartColumn />
            <Analysis />
          </main>
          <QuotePanel />
        </div>
      </div>
      <Toolbar />
      <span className="absolute right-[16px] bottom-[6px] text-[13px] leading-[18px] text-[#c8c8c8]">CSDN @沃心</span>
    </div>
  );
}
